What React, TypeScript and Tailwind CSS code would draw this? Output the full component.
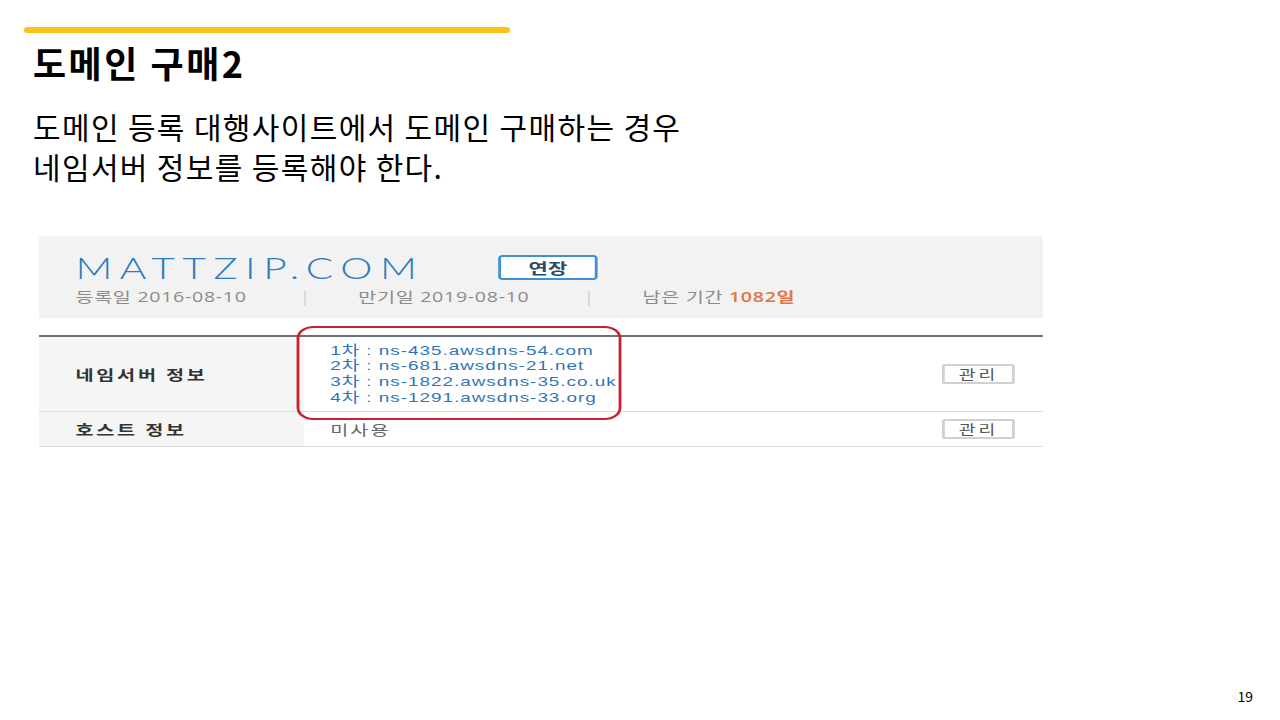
import React from 'react';

const nameServers = [
  '1차 : ns-435.awsdns-54.com',
  '2차 : ns-681.awsdns-21.net',
  '3차 : ns-1822.awsdns-35.co.uk',
  '4차 : ns-1291.awsdns-33.org',
];

const ManageButton: React.FC = () => (
  <button className="h-[20px] w-[52px] rounded-[2px] border-2 border-[#d0d0d0] bg-white text-[13px] leading-none tracking-[2px] text-[#555]">
    관리
  </button>
);

const DomainPanel: React.FC = () => (
  <div className="ml-[39px] mt-[50px] w-[1004px]">
    {/* screenshot in the slide is stretched horizontally */}
    <div className="relative w-[717px] origin-left scale-x-[1.4] font-['Open_Sans','Noto_Sans_CJK_KR',sans-serif]">
      <div className="h-[82px] bg-[#f2f2f2] pl-[26px] pt-[17px]">
        <div className="flex h-[29px] items-center">
          <div className="w-[302px] font-['Lato',sans-serif] text-[29px] font-light leading-none tracking-[5.4px] text-[#2b7cc1]">
            MATTZIP.COM
          </div>
          <button className="h-[25px] w-[71px] rounded-[3px] border-2 border-[#3d8fd6] bg-white font-['Noto_Sans_CJK_KR',sans-serif] text-[15px] font-bold leading-none text-[#294a6b]">
            연장
          </button>
        </div>
        <div className="mt-[5px] flex text-[14px] leading-[20px] tracking-[0.5px] text-[#8b8b8b]">
          <span className="w-[160px]">등록일 2016-08-10</span>
          <span className="w-[42px] text-[#d0d0d0]">|</span>
          <span className="w-[161px]">만기일 2019-08-10</span>
          <span className="w-[42px] text-[#d0d0d0]">|</span>
          <span>
            남은 기간 <span className="font-semibold text-[#e5743e]">1082일</span>
          </span>
        </div>
      </div>

      <div className="mt-[17px] border-t-2 border-[#66717b]">
        <div className="flex h-[75px] border-b border-[#dcdcdc]">
          <div className="flex w-[189px] items-center bg-[#f5f5f5] pl-[26px] font-['Noto_Sans_CJK_KR',sans-serif] text-[14px] font-bold tracking-[2px] text-[#333]">
            네임서버 정보
          </div>
          <div className="flex flex-1 items-center justify-between pl-[19px] pr-[20px]">
            <div className="font-['Liberation_Sans','Noto_Sans_CJK_KR',sans-serif] text-[13.5px] leading-[15.6px] tracking-[0.7px] text-[#2f76b8]">
              {nameServers.map((ns) => (
                <div key={ns}>{ns}</div>
              ))}
            </div>
            <ManageButton />
          </div>
        </div>
        <div className="flex h-[35px] border-b border-[#dcdcdc]">
          <div className="flex w-[189px] items-center bg-[#f5f5f5] pl-[26px] font-['Noto_Sans_CJK_KR',sans-serif] text-[14px] font-bold tracking-[2px] text-[#333]">
            호스트 정보
          </div>
          <div className="flex flex-1 items-center justify-between pl-[19px] pr-[20px]">
            <span className="text-[14px] tracking-[1.5px] text-[#666]">미사용</span>
            <ManageButton />
          </div>
        </div>
      </div>

      <div className="absolute left-[184px] top-[90px] h-[94px] w-[232px] rounded-[12px] border-2 border-[#c8202f]" />
    </div>
  </div>
);

export default function App() {
  return (
    <div className="relative h-[720px] w-[1280px] overflow-hidden bg-white font-['Noto_Sans_CJK_KR',sans-serif] text-black">
      <div className="ml-[24px] pt-[27px]">
        <div className="h-[6px] w-[486px] rounded-full bg-[#fbc21a]" />
      </div>
      <h1 className="ml-[33px] mt-[7px] text-[36px] font-bold leading-[44px] tracking-[2.5px]">도메인 구매2</h1>
      <div className="ml-[33px] mt-[22px] text-[30px] leading-[40px] tracking-[1.35px]">
        <p>도메인 등록 대행사이트에서 도메인 구매하는 경우</p>
        <p>네임서버 정보를 등록해야 한다.</p>
      </div>
      <DomainPanel />
      <div className="absolute bottom-[13px] right-[27px] text-[14px] text-black">19</div>
    </div>
  );
}
